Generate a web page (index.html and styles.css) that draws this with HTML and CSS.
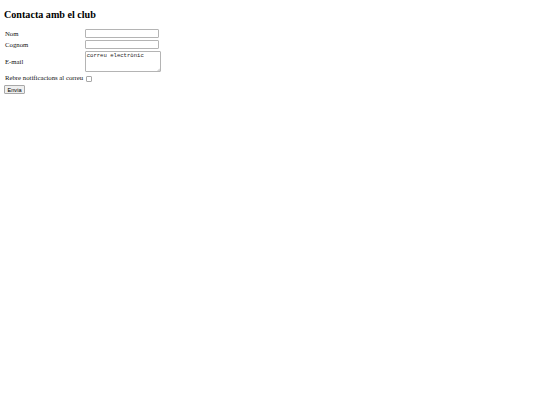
FILE: index.html
```html
<!DOCTYPE html>
<html lang="ca">
<head>
<meta charset="utf-8">
<title>Contacta amb el club</title>
<link rel="stylesheet" href="styles.css">
</head>
<body>
<h2 class="title">Contacta amb el club</h2>
<form class="form">
  <div class="grid">
    <label class="lbl" for="nom">Nom</label>
    <input class="field" type="text" id="nom" name="nom">
    <label class="lbl" for="cognom">Cognom</label>
    <input class="field" type="text" id="cognom" name="cognom">
    <label class="lbl" for="email">E-mail</label>
    <span class="area-wrap">
      <textarea class="area" id="email" name="email">correu electrònic</textarea>
      <svg class="grip" width="3" height="3" viewBox="0 0 3 3"><path d="M3 0.6 L0.6 3 M3 1.8 L1.8 3" stroke="#8a8a8a" stroke-width="0.5"/></svg>
    </span>
    <label class="lbl" for="notif">Rebre notificacions al correu</label>
    <span class="check-cell"><input class="check" type="checkbox" id="notif" name="notif"></span>
  </div>
  <button type="submit" class="send">Envia</button>
</form>
</body>
</html>
```

FILE: styles.css
```css
html, body { margin: 0; padding: 0; background: #fff; }
body {
  font-family: "Liberation Serif", "Times New Roman", serif;
  color: #000;
  padding: 0 0 0 4px;
}
.title {
  font-family: "Liberation Serif", "Times New Roman", serif;
  font-size: 10.125px;
  line-height: 12px;
  font-weight: bold;
  margin: 8.5px 0 0 0;
}
.form { margin: 0; }
.grid {
  margin-top: 8.8px;
  display: grid;
  grid-template-columns: 80.7px auto;
  grid-template-rows: 9px 8.5px 21.7px 8px;
  row-gap: 2px;
  align-items: center;
  justify-items: start;
}
.lbl {
  font-size: 6.75px;
  line-height: 8px;
  padding-left: 1px;
  white-space: nowrap;
  color: #111;
}
.field {
  box-sizing: border-box;
  width: 74.3px;
  height: 9px;
  margin: 0;
  padding: 0 1px;
  border: 1px solid #b4b4b4;
  border-radius: 1px;
  background: #fff;
  font-size: 5.6px;
  outline: none;
}
.grid .field:nth-of-type(2) { height: 8.5px; }
.area-wrap {
  position: relative;
  display: block;
  width: 76px;
  height: 21.7px;
}
.area {
  box-sizing: border-box;
  display: block;
  width: 76px;
  height: 21.7px;
  margin: 0;
  padding: 0.8px 1px;
  border: 1px solid #b4b4b4;
  border-radius: 1px;
  background: #fff;
  font-family: "Liberation Mono", "DejaVu Sans Mono", monospace;
  font-size: 5.6px;
  line-height: 6.3px;
  color: #222;
  resize: none;
  overflow: hidden;
  outline: none;
}
.grip {
  position: absolute;
  right: 1px;
  bottom: 1px;
  display: block;
}
.check-cell { display: flex; align-items: center; padding-top: 1px; }
.check {
  appearance: none;
  -webkit-appearance: none;
  box-sizing: border-box;
  width: 5.5px;
  height: 5.5px;
  margin: 0 0 0 1.5px;
  border: 1px solid #a8a8a8;
  border-radius: 1px;
  background: #fff;
}
.send {
  box-sizing: border-box;
  display: block;
  margin: 3px 0 0 0;
  width: 21px;
  height: 8.5px;
  padding: 0;
  border: 1px solid #a8a8a8;
  border-radius: 1px;
  background: #efefef;
  font-family: "Liberation Sans", Arial, sans-serif;
  font-size: 5.6px;
  line-height: 6px;
  color: #000;
}
```
